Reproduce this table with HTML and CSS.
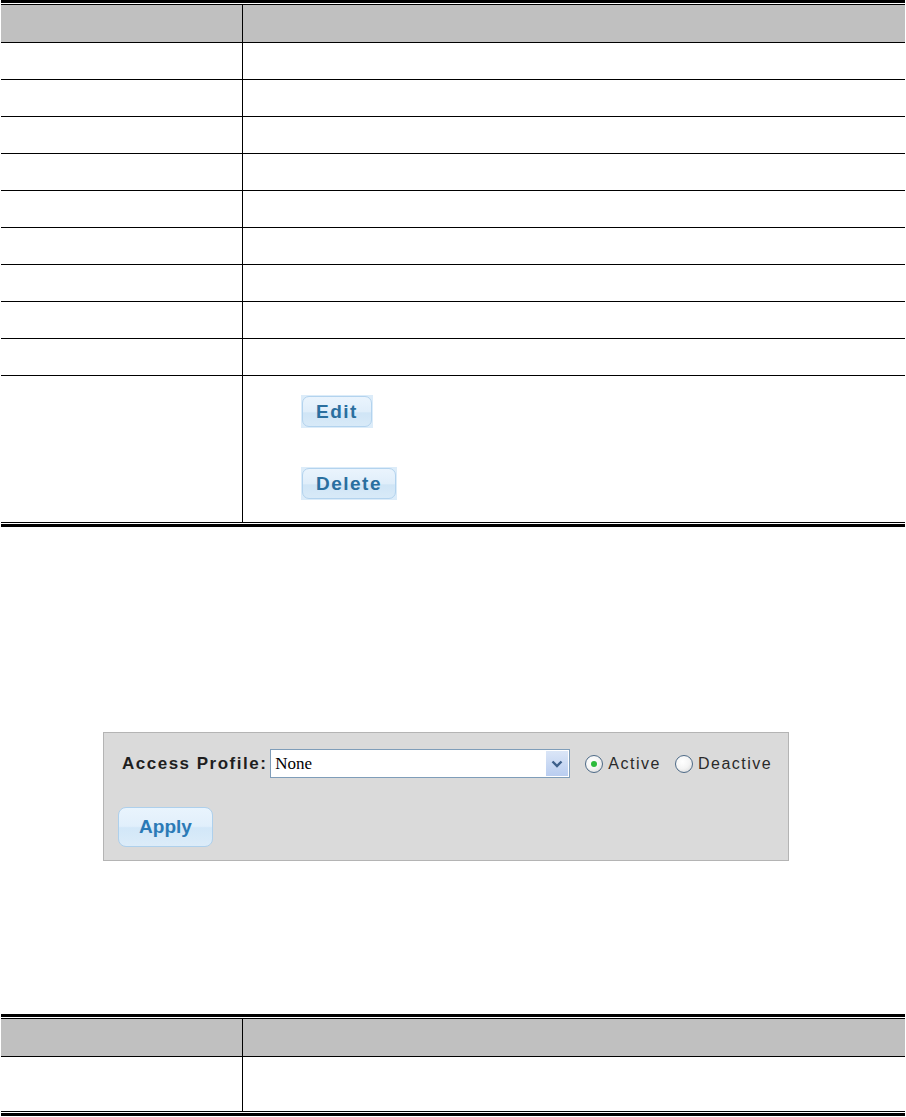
FILE: index.html
```html
<!DOCTYPE html>
<html>
<head>
<meta charset="utf-8">
<link rel="stylesheet" href="styles.css">
</head>
<body>
<div class="tbl-wrap">
  <table class="doc-table">
    <tr class="head"><td class="c1"></td><td class="c2"></td></tr>
    <tr class="row"><td class="c1"></td><td class="c2"></td></tr>
    <tr class="row"><td class="c1"></td><td class="c2"></td></tr>
    <tr class="row"><td class="c1"></td><td class="c2"></td></tr>
    <tr class="row"><td class="c1"></td><td class="c2"></td></tr>
    <tr class="row"><td class="c1"></td><td class="c2"></td></tr>
    <tr class="row"><td class="c1"></td><td class="c2"></td></tr>
    <tr class="row"><td class="c1"></td><td class="c2"></td></tr>
    <tr class="row"><td class="c1"></td><td class="c2"></td></tr>
    <tr class="row"><td class="c1"></td><td class="c2"></td></tr>
    <tr class="tall">
      <td class="c1"></td>
      <td class="c2">
        <div class="btn-stack">
          <span class="btn-box btn-edit"><span class="btn">Edit</span></span>
          <span class="btn-box btn-delete"><span class="btn">Delete</span></span>
        </div>
      </td>
    </tr>
  </table>
</div>

<div class="panel">
  <div class="panel-row">
    <span class="label">Access Profile:</span>
    <div class="select">
      <span class="select-text">None</span>
      <span class="select-arrow">
        <svg width="12" height="8" viewBox="0 0 12 8"><path d="M1.5 1.5 L6 6 L10.5 1.5" fill="none" stroke="#3d5f8a" stroke-width="2.4"/></svg>
      </span>
    </div>
    <span class="radio checked"><span class="dot"></span></span>
    <span class="radio-label">Active</span>
    <span class="radio second"></span>
    <span class="radio-label">Deactive</span>
  </div>
  <div class="panel-row2">
    <span class="apply">Apply</span>
  </div>
</div>

<div class="tbl-wrap second-table">
  <table class="doc-table">
    <tr class="head"><td class="c1"></td><td class="c2"></td></tr>
    <tr class="body-row"><td class="c1"></td><td class="c2"></td></tr>
  </table>
</div>
</body>
</html>
```

FILE: styles.css
```css
html, body {
  margin: 0;
  padding: 0;
  background: #ffffff;
}

body {
  width: 906px;
  font-family: "Liberation Sans", Arial, sans-serif;
}

.tbl-wrap {
  margin: 0 1px 0 1px;
  border-top: 3px solid #000;
  border-bottom: 3px solid #000;
  padding: 1px 0;
}

.doc-table {
  width: 100%;
  border-collapse: collapse;
  border-top: 1px solid #000;
  border-bottom: 1px solid #000;
  table-layout: fixed;
}

.doc-table td {
  padding: 0;
  border-top: 1px solid #000;
  vertical-align: top;
}

.doc-table tr:first-child td {
  border-top: none;
}

.doc-table td.c1 {
  width: 241px;
  border-right: 1px solid #000;
}

.doc-table tr.head td {
  background: #c0c0c0;
  height: 37px;
}

.doc-table tr.row td {
  height: 36px;
}

.doc-table tr.tall td {
  height: 146px;
}

.doc-table tr.body-row td {
  height: 54px;
}

.btn-stack {
  display: flex;
  flex-direction: column;
  align-items: flex-start;
  gap: 39px;
  padding: 19px 0 0 58px;
}

.btn-box {
  display: inline-block;
  background: #dcecf9;
  padding: 1px;
}

.btn {
  display: block;
  height: 29px;
  line-height: 29px;
  border: 1px solid #b3d3ee;
  border-radius: 7px;
  background: linear-gradient(#eaf4fd 0%, #e0eefa 50%, #d0e5f6 55%, #d8eaf8 100%);
  color: #2a6f9f;
  font-family: "Liberation Sans", Arial, sans-serif;
  font-weight: bold;
  font-size: 19px;
  letter-spacing: 1.5px;
  text-align: center;
}

.btn-edit .btn {
  width: 68px;
}

.btn-delete .btn {
  width: 92px;
}

.panel {
  margin: 205px 0 0 103px;
  width: 684px;
  border: 1px solid #b4b4b4;
  background: #dadada;
  padding: 16px 0 13px 0;
}

.panel-row {
  display: flex;
  align-items: center;
  height: 29px;
  padding-left: 18px;
}

.label {
  font-weight: bold;
  font-size: 17px;
  letter-spacing: 1.5px;
  color: #1e1e1e;
  margin-right: 3px;
}

.select {
  width: 298px;
  height: 27px;
  border: 1px solid #7f9db9;
  background: #ffffff;
  display: flex;
  align-items: center;
  justify-content: space-between;
}

.select-text {
  font-family: "Liberation Serif", "Times New Roman", serif;
  font-size: 17px;
  color: #000;
  padding-left: 4px;
}

.select-arrow {
  width: 22px;
  height: 25px;
  margin-right: 1px;
  background: linear-gradient(#dbe6f7, #b9cdf0);
  display: flex;
  align-items: center;
  justify-content: center;
}

.radio {
  width: 16px;
  height: 16px;
  border-radius: 50%;
  border: 1px solid #4d6a87;
  background: radial-gradient(circle at 40% 35%, #ffffff 0%, #f4f4f4 50%, #d4d4d4 100%);
  display: flex;
  align-items: center;
  justify-content: center;
  margin-left: 15px;
}

.radio.second {
  margin-left: 14px;
}

.dot {
  width: 6px;
  height: 6px;
  border-radius: 50%;
  background: #2dbb3c;
}

.radio-label {
  font-size: 16px;
  letter-spacing: 1.5px;
  color: #2a2a2a;
  margin-left: 5px;
}

.panel-row2 {
  margin-top: 29px;
  padding-left: 14px;
}

.apply {
  display: inline-block;
  width: 93px;
  height: 38px;
  line-height: 38px;
  border: 1px solid #aed0ec;
  border-radius: 8px;
  background: linear-gradient(#e9f4fd 0%, #e1effb 48%, #d2e7f8 52%, #dcecf9 100%);
  color: #2b7ab6;
  font-weight: bold;
  font-size: 19px;
  text-align: center;
}

.second-table {
  margin-top: 153px;
}
```
